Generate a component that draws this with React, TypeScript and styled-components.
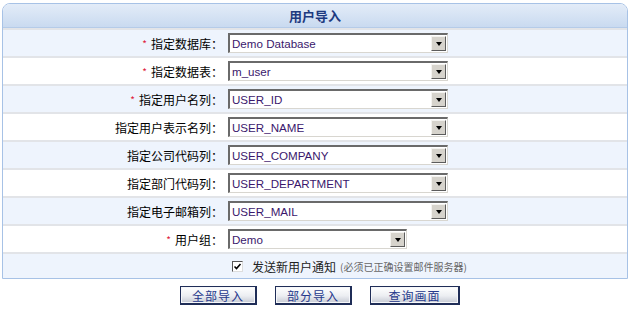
import styled, { createGlobalStyle } from "styled-components"

const GlobalStyle = createGlobalStyle`
  body {
    margin: 0;
    background: #ffffff;
    font-family: "Noto Sans CJK SC", "Liberation Sans", sans-serif;
    font-size: 12px;
    color: #000;
  }
`

const Page = styled.div`
  padding: 3px 4px 0 2px;
  width: 626px;
`

const Panel = styled.div`
  border: 1px solid #a7c2e6;
  border-top-left-radius: 8px;
  border-top-right-radius: 8px;
  overflow: hidden;
`

const Header = styled.div`
  height: 23px;
  display: flex;
  align-items: center;
  justify-content: center;
  background: linear-gradient(#e3ecf8, #c9daf0);
  border-bottom: 1px solid #b5cbe8;
  color: #1d3a80;
  font-weight: bold;
  font-size: 13px;
`

const Row = styled.div<{ $alt: boolean; $h?: number }>`
  display: grid;
  grid-template-columns: 225px 1fr;
  align-items: center;
  height: ${p => p.$h ?? 26}px;
  border-top: 2px solid #e2e4e8;
  background: ${p => (p.$alt ? "#eef4fd" : "#ffffff")};
  &:first-of-type {
    border-top: none;
    height: 28px;
  }
`

const Label = styled.div`
  text-align: right;
  padding-right: 5px;
  white-space: nowrap;
`

const Star = styled.span`
  color: #e0203a;
  font-size: 10px;
  margin-right: 4px;
  vertical-align: 1px;
`

const Field = styled.div`
  display: flex;
  align-items: center;
`

const Select = styled.div<{ $w: number }>`
  width: ${p => p.$w}px;
  height: 20px;
  box-sizing: border-box;
  border-top: 2px solid #6a6a6a;
  border-left: 2px solid #6a6a6a;
  border-right: 1px solid #d8d6d0;
  border-bottom: 1px solid #d8d6d0;
  background: #fff;
  display: flex;
  align-items: center;
  justify-content: space-between;
`

const Value = styled.span`
  font-family: "Liberation Sans", Arial, sans-serif;
  font-size: 11.6px;
  color: #3a176c;
  padding-left: 2px;
`

const Arrow = styled.div`
  width: 15px;
  height: 15px;
  box-sizing: border-box;
  margin-right: 1px;
  background: #d6d3cc;
  border-top: 1px solid #f4f3f0;
  border-left: 1px solid #f4f3f0;
  border-right: 1px solid #5c5c5c;
  border-bottom: 1px solid #5c5c5c;
  display: flex;
  align-items: center;
  justify-content: center;
  &::after {
    content: "";
    border-left: 3.5px solid transparent;
    border-right: 3.5px solid transparent;
    border-top: 4px solid #000;
  }
`

const CheckWrap = styled.div`
  display: flex;
  align-items: center;
  padding-left: 4px;
`

const Box = styled.div`
  width: 11px;
  height: 11px;
  box-sizing: border-box;
  border-top: 1px solid #555;
  border-left: 1px solid #555;
  border-right: 1px solid #ddd;
  border-bottom: 1px solid #ddd;
  background: #fff;
  margin-right: 9px;
  display: flex;
  align-items: center;
  justify-content: center;
`

const CheckText = styled.span`
  color: #222;
`

const Note = styled.span`
  font-size: 10px;
  color: #666;
  margin-left: 4px;
`

const Buttons = styled.div`
  display: flex;
  justify-content: center;
  gap: 18px;
  padding: 7px 0 0 10px;
`

const Button = styled.button<{ $w: number }>`
  width: ${p => p.$w}px;
  height: 19px;
  padding: 0;
  border: 1px solid #1f2d57;
  border-right-width: 2px;
  border-bottom-width: 2px;
  background: linear-gradient(#ffffff, #eceef2 55%, #c5c9d3);
  color: #26398c;
  font-family: "Noto Sans CJK SC", sans-serif;
  font-size: 12px;
  line-height: 15px;
  letter-spacing: 1px;
  box-shadow: inset 0 0 0 1px #f6f7fa;
`

const fields = [
  { label: "指定数据库", value: "Demo Database", req: true, w: 220 },
  { label: "指定数据表", value: "m_user", req: true, w: 220 },
  { label: "指定用户名列", value: "USER_ID", req: true, w: 220 },
  { label: "指定用户表示名列", value: "USER_NAME", req: false, w: 220 },
  { label: "指定公司代码列", value: "USER_COMPANY", req: false, w: 220 },
  { label: "指定部门代码列", value: "USER_DEPARTMENT", req: false, w: 220 },
  { label: "指定电子邮箱列", value: "USER_MAIL", req: false, w: 220 },
  { label: "用户组", value: "Demo", req: true, w: 179 },
]

const App = () => {
  return (
    <Page>
      <GlobalStyle />
      <Panel>
        <Header>用户导入</Header>

        {fields.map((f, i) => (
          <Row key={f.label} $alt={i % 2 === 0}>
            <Label>
              {f.req && <Star>*</Star>}
              {f.label}：
            </Label>
            <Field>
              <Select $w={f.w}>
                <Value>{f.value}</Value>
                <Arrow />
              </Select>
            </Field>
          </Row>
        ))}

        <Row $alt={true} $h={24}>
          <div />
          <CheckWrap>
            <Box>
              <svg width="9" height="9" viewBox="0 0 9 9">
                <path d="M1.5 4.5 L3.5 6.5 L7.5 2" stroke="#000" strokeWidth="1.6" fill="none" />
              </svg>
            </Box>
            <CheckText>发送新用户通知</CheckText>
            <Note>(必须已正确设置邮件服务器)</Note>
          </CheckWrap>
        </Row>
      </Panel>

      <Buttons>
        <Button $w={77}>全部导入</Button>
        <Button $w={77}>部分导入</Button>
        <Button $w={90}>查询画面</Button>
      </Buttons>
    </Page>
  )
}

export default App
